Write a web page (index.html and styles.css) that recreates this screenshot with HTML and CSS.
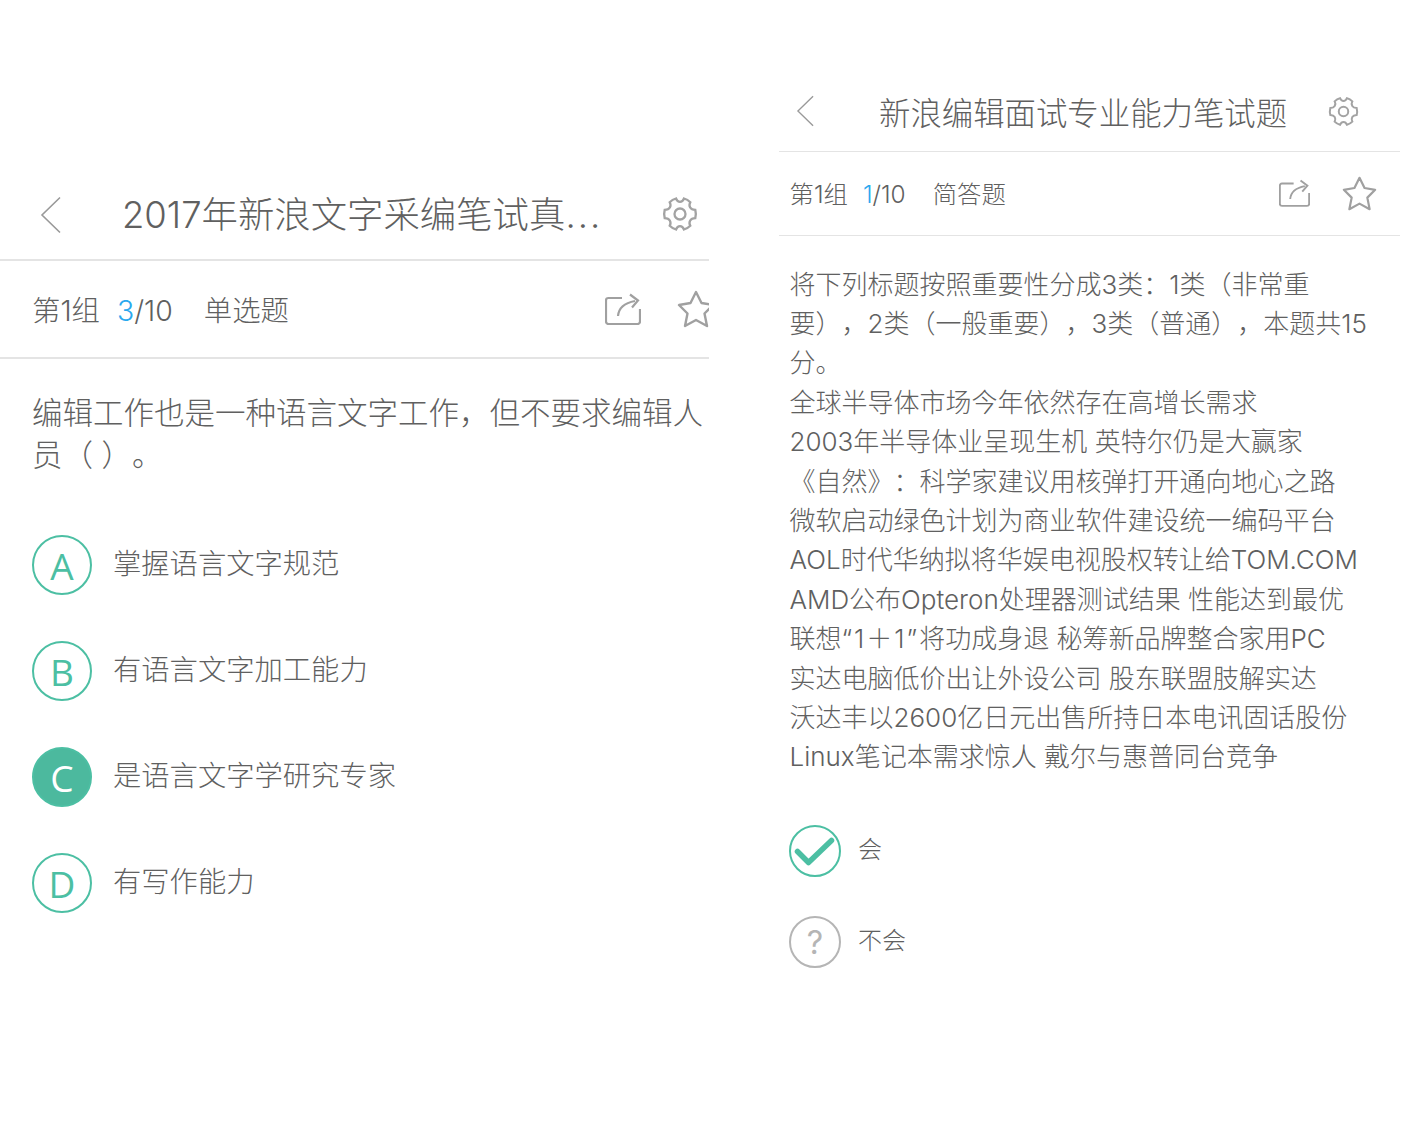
FILE: index.html
```html
<!DOCTYPE html>
<html lang="zh-CN">
<head>
    <meta charset="UTF-8">
    <title>笔试题</title>
    <link rel="stylesheet" href="styles.css">
</head>
<body>
    <div class="page">
        <div class="panel panel-left">
            <div class="topbar">
                <svg class="back" viewBox="0 0 22 38"><path d="M20 1.500 L2 19 L20 36.500"/></svg>
                <div class="title">2017年新浪文字采编笔试真<span class="dots">...</span></div>
                <svg class="gear" viewBox="0 0 36 36"><path d="M14 2.500 C15 5 16.300 5.800 18 5.800 C19.700 5.800 21 5 22 2.500 C24.500 3.200 26.500 4.400 28.300 6.200 C27 8.500 27.300 10 28.200 11.500 C29 12.900 30.500 13.800 33.300 13.900 C34 16.600 34 19.400 33.300 22.100 C30.500 22.200 29 23.100 28.200 24.500 C27.300 26 27 27.500 28.300 29.800 C26.500 31.600 24.500 32.800 22 33.500 C21 31 19.700 30.200 18 30.200 C16.300 30.200 15 31 14 33.500 C11.500 32.800 9.500 31.600 7.700 29.800 C9 27.500 8.700 26 7.800 24.500 C7 23.100 5.500 22.200 2.700 22.100 C2 19.400 2 16.600 2.700 13.900 C5.500 13.800 7 12.900 7.800 11.500 C8.700 10 9 8.500 7.700 6.200 C9.500 4.400 11.500 3.200 14 2.500 Z"/><circle cx="18" cy="18" r="5.500"/></svg>
            </div>
            <div class="subbar">
                <div class="meta">第1组<span class="progress"><span class="current">3</span>/10</span><span class="type">单选题</span></div>
                <svg class="share" viewBox="0 0 36 32"><path d="M17 5 H3.500 Q1 5 1 7.500 V28.500 Q1 31 3.500 31 H32.500 Q35 31 35 28.500 V16"/><path d="M13 23 Q14 11 30 8"/><path d="M25 1.500 L33 7.500 L27 14.500"/></svg>
                <svg class="star" viewBox="0 0 38 38"><path d="M19 2 L24.500 13 L36 15 L27.500 23.500 L30 36 L19 30 L8 36 L10.500 23.500 L2 15 L13.500 13 Z"/></svg>
            </div>
            <div class="question">编辑工作也是一种语言文字工作，但不要求编辑人员（ ）。</div>
            <div class="options">
                <div class="option"><span class="badge">A</span><span class="option-text">掌握语言文字规范</span></div>
                <div class="option"><span class="badge">B</span><span class="option-text">有语言文字加工能力</span></div>
                <div class="option"><span class="badge selected">C</span><span class="option-text">是语言文字学研究专家</span></div>
                <div class="option"><span class="badge">D</span><span class="option-text">有写作能力</span></div>
            </div>
        </div>

        <div class="panel panel-right">
            <div class="topbar">
                <svg class="back" viewBox="0 0 22 38"><path d="M20 1.500 L2 19 L20 36.500"/></svg>
                <div class="title">新浪编辑面试专业能力笔试题</div>
                <svg class="gear" viewBox="0 0 36 36"><path d="M14 2.500 C15 5 16.300 5.800 18 5.800 C19.700 5.800 21 5 22 2.500 C24.500 3.200 26.500 4.400 28.300 6.200 C27 8.500 27.300 10 28.200 11.500 C29 12.900 30.500 13.800 33.300 13.900 C34 16.600 34 19.400 33.300 22.100 C30.500 22.200 29 23.100 28.200 24.500 C27.300 26 27 27.500 28.300 29.800 C26.500 31.600 24.500 32.800 22 33.500 C21 31 19.700 30.200 18 30.200 C16.300 30.200 15 31 14 33.500 C11.500 32.800 9.500 31.600 7.700 29.800 C9 27.500 8.700 26 7.800 24.500 C7 23.100 5.500 22.200 2.700 22.100 C2 19.400 2 16.600 2.700 13.900 C5.500 13.800 7 12.900 7.800 11.500 C8.700 10 9 8.500 7.700 6.200 C9.500 4.400 11.500 3.200 14 2.500 Z"/><circle cx="18" cy="18" r="5.500"/></svg>
            </div>
            <div class="subbar">
                <div class="meta">第1组<span class="progress"><span class="current">1</span>/10</span><span class="type">简答题</span></div>
                <svg class="share" viewBox="0 0 36 32"><path d="M17 5 H3.500 Q1 5 1 7.500 V28.500 Q1 31 3.500 31 H32.500 Q35 31 35 28.500 V16"/><path d="M13 23 Q14 11 30 8"/><path d="M25 1.500 L33 7.500 L27 14.500"/></svg>
                <svg class="star" viewBox="0 0 38 38"><path d="M19 2 L24.500 13 L36 15 L27.500 23.500 L30 36 L19 30 L8 36 L10.500 23.500 L2 15 L13.500 13 Z"/></svg>
            </div>
            <div class="essay">
                <div>将下列标题按照重要性分成3类：1类（非常重要），2类（一般重要），3类（普通），本题共15分。</div>
                <div>全球半导体市场今年依然存在高增长需求</div>
                <div>2003年半导体业呈现生机 英特尔仍是大赢家</div>
                <div>《自然》：科学家建议用核弹打开通向地心之路</div>
                <div>微软启动绿色计划为商业软件建设统一编码平台</div>
                <div>AOL时代华纳拟将华娱电视股权转让给TOM.COM</div>
                <div>AMD公布Opteron处理器测试结果 性能达到最优</div>
                <div>联想<span class="quoted">“1＋1”</span>将功成身退 秘筹新品牌整合家用PC</div>
                <div>实达电脑低价出让外设公司 股东联盟肢解实达</div>
                <div>沃达丰以2600亿日元出售所持日本电讯固话股份</div>
                <div>Linux笔记本需求惊人 戴尔与惠普同台竞争</div>
            </div>
            <div class="answers">
                <div class="answer">
                    <svg class="mark mark-yes" viewBox="0 0 52 52"><circle cx="26" cy="26" r="25"/><path d="M8.500 26.500 L19.500 37.500 L42.500 15.500"/></svg>
                    <span class="answer-text">会</span>
                </div>
                <div class="answer">
                    <span class="mark mark-no">?</span>
                    <span class="answer-text">不会</span>
                </div>
            </div>
        </div>
    </div>
</body>
</html>
```

FILE: styles.css
```css
body {
    margin: 0;
    background-color: white;
    font-family: Inter, "Noto Sans CJK SC", sans-serif;
    font-weight: 300;
    color: #606060;
    text-spacing-trim: space-all;
}

.page {
    display: flex;
    align-items: flex-start;
    height: 1134px;
    overflow: hidden;
}

.panel {
    flex-shrink: 0;
    overflow: hidden;
}

.panel-left {
    width: 709px;
    margin-top: 171px;
}

.panel-right {
    width: 621px;
    margin-left: 70px;
    margin-top: 71px;
}

svg {
    flex-shrink: 0;
    fill: none;
    stroke: #999;
}

.topbar {
    display: flex;
    align-items: center;
    border-bottom: 2px solid #e4e4e4;
}

.panel-left .topbar {
    height: 88px;
    padding-left: 40px;
}

.panel-right .topbar {
    height: 80px;
    padding-left: 17px;
    border-bottom-width: 1.5px;
}

.back {
    stroke-width: 1.6;
}

.panel-left .back {
    width: 22px;
    height: 38px;
}

.panel-right .back {
    width: 19px;
    height: 32px;
}

.title {
    white-space: nowrap;
}

.panel-left .title {
    width: 480px;
    margin-left: 60px;
    margin-bottom: 6px;
    font-size: 36.400px;
}

.panel-right .title {
    width: 420px;
    margin-left: 64px;
    font-size: 31.400px;
}

.dots {
    letter-spacing: 2px;
}

.gear {
    stroke: #a3a3a3;
    stroke-width: 2.300;
}

.panel-left .gear {
    width: 36px;
    height: 36px;
    margin-left: 60px;
    margin-bottom: 2px;
}

.panel-right .gear {
    width: 31px;
    height: 31px;
    margin-left: 29px;
}

.subbar {
    display: flex;
    align-items: center;
    border-bottom: 2px solid #e4e4e4;
}

.panel-left .subbar {
    height: 96px;
    padding-left: 32px;
    font-size: 28.400px;
}

.panel-right .subbar {
    height: 82.500px;
    padding-left: 10.500px;
    border-bottom-width: 1.5px;
    font-size: 24.400px;
}

.meta {
    flex-grow: 1;
    margin-bottom: 2px;
    white-space: nowrap;
}

.progress {
    margin-left: 17px;
}

.panel-right .progress {
    margin-left: 15px;
}

.current {
    color: #2aa8ee;
}

.type {
    margin-left: 31px;
}

.panel-right .type {
    margin-left: 27px;
}

.share {
    stroke-width: 2.200;
    stroke: #a0a0a0;
}

.panel-left .share {
    width: 36px;
    height: 32px;
    margin-right: 36px;
}

.panel-right .share {
    width: 31px;
    height: 28px;
    margin-right: 32px;
}

.star {
    stroke-width: 2.400;
    stroke: #a0a0a0;
    stroke-linejoin: round;
}

.panel-left .star {
    width: 38px;
    height: 38px;
    margin-right: -6px;
}

.panel-right .star {
    width: 35px;
    height: 35px;
    margin-right: 23px;
}

.question {
    padding: 33px 0 0 32px;
    font-size: 30.500px;
    line-height: 42px;
}

.options {
    display: flex;
    flex-direction: column;
    gap: 46px;
    padding: 59px 0 0 32px;
}

.option {
    display: flex;
    align-items: center;
    gap: 21px;
    font-size: 28.300px;
}

.option-text {
    margin-bottom: 8px;
}

.badge {
    display: flex;
    align-items: center;
    justify-content: center;
    box-sizing: border-box;
    width: 60px;
    height: 60px;
    border: 2px solid #4cbfa3;
    border-radius: 50%;
    color: #4cbfa3;
    font-family: "Open Sans", sans-serif;
    font-weight: 400;
    font-size: 37px;
}

.badge.selected {
    background-color: #4cb99e;
    color: white;
}

.essay {
    width: 590px;
    padding: 29px 0 0 10.500px;
    font-size: 26px;
    line-height: 39.400px;
}

.quoted {
    letter-spacing: 2px;
}

.answers {
    display: flex;
    flex-direction: column;
    gap: 39px;
    padding: 48.500px 0 0 10px;
}

.answer {
    display: flex;
    align-items: center;
    gap: 17px;
    font-size: 24px;
}

.answer-text {
    margin-bottom: 8px;
}

.mark {
    box-sizing: border-box;
    width: 52px;
    height: 52px;
}

.mark-yes circle {
    stroke: #4cbfa3;
    stroke-width: 2;
}

.mark-yes path {
    stroke: #4cbfa3;
    stroke-width: 5.500;
    stroke-linecap: round;
    stroke-linejoin: round;
}

.mark-no {
    display: flex;
    align-items: center;
    justify-content: center;
    border: 2px solid #b5b5b5;
    border-radius: 50%;
    color: #b5b5b5;
    font-weight: 400;
    font-size: 32px;
}
```
